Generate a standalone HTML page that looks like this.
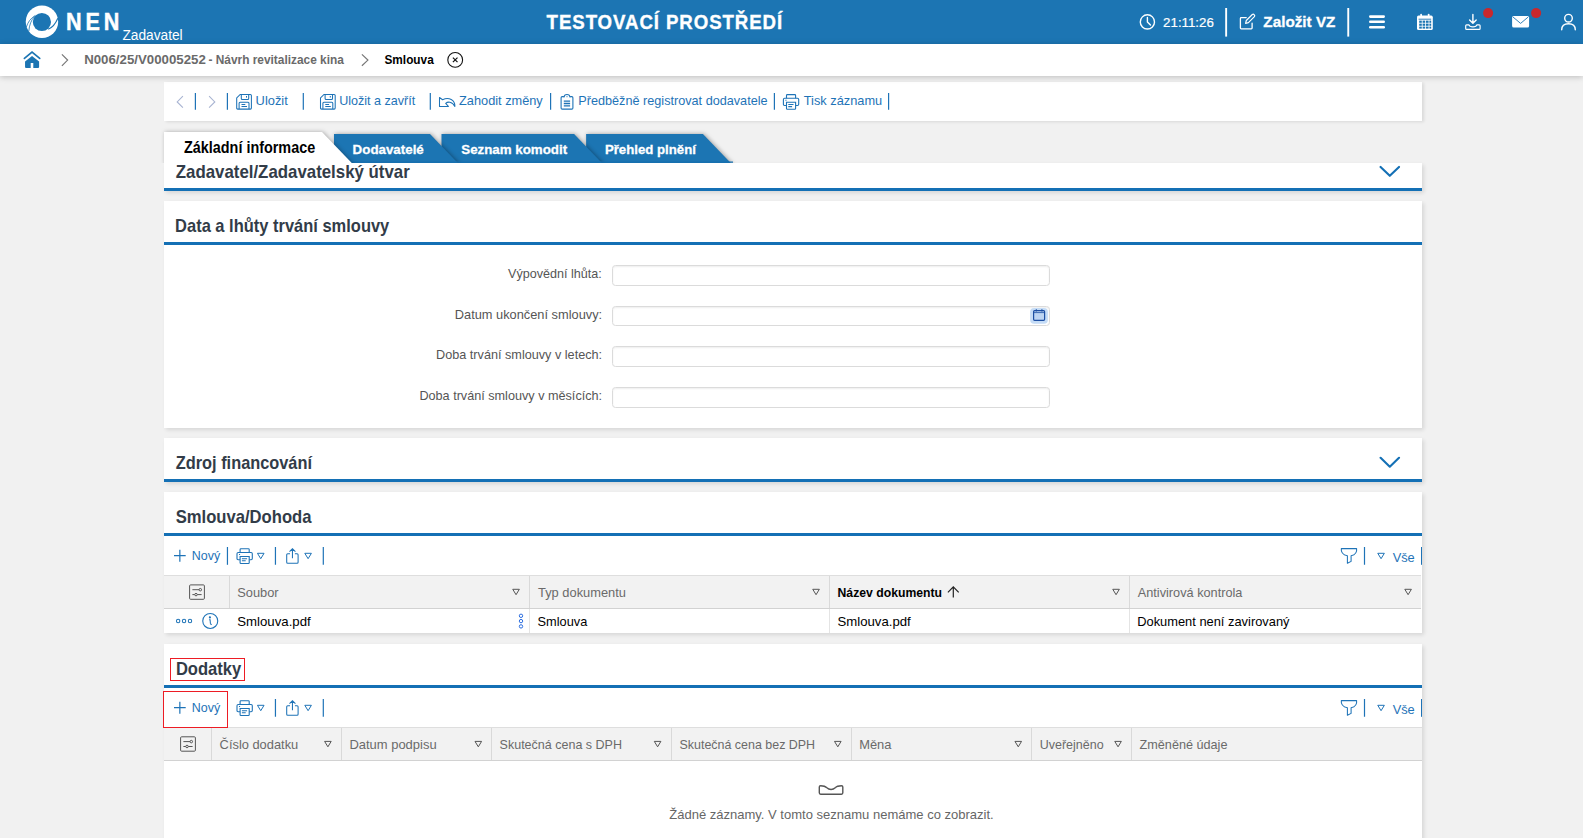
<!DOCTYPE html>
<html lang="cs"><head><meta charset="utf-8"><title>NEN - Smlouva</title>
<style>
html,body{margin:0;padding:0}
body{width:1583px;height:838px;overflow:hidden;background:#f1f1f1;font-family:"Liberation Sans",sans-serif;position:relative}
.t{position:absolute;white-space:nowrap;transform-origin:0 0;display:block}
.abs{position:absolute}
.panel{position:absolute;left:164px;width:1258px;background:#fff;box-shadow:2px 2px 4px rgba(0,0,0,.11)}
.line{position:absolute;left:0;width:1258px;height:3px;background:#1470b5}
.inp{position:absolute;left:612px;width:436px;height:18.5px;border:1px solid #dbdbdb;border-radius:3.5px;background:#fff;box-shadow:inset 0 1px 2px rgba(0,0,0,.07)}
.th{position:absolute;left:0;width:1257px;background:#f2f2f2;border-top:1px solid #dedede;border-bottom:1px solid #d2d2d2;height:32px}
.vs{position:absolute;width:1px;background:#d9d9d9}
svg{position:absolute;left:0;top:0;overflow:visible}
</style></head><body>
<div class="abs" style="left:0;top:0;width:1583px;height:44px;background:#1c75b3"></div>
<div class="panel" style="top:82px;height:39px;box-shadow:2px 1px 3px rgba(0,0,0,.10)"></div>
<div class="abs" style="left:0;top:44px;width:1583px;height:32px;background:#fff;box-shadow:0 1px 6px rgba(0,0,0,.22)"></div>
<div class="panel" style="top:163px;height:28px"><div class="line" style="bottom:0"></div></div>
<div class="panel" style="top:201px;height:227px"><div class="line" style="top:41px"></div></div>
<div class="inp" style="top:265px"></div>
<div class="inp" style="top:305.7px"></div>
<div class="inp" style="top:346.3px"></div>
<div class="inp" style="top:387px"></div>
<div class="panel" style="top:438px;height:44px"><div class="line" style="top:41px"></div></div>
<div class="panel" style="top:492px;height:141px"><div class="line" style="top:41px"></div>
<div class="th" style="top:83px"></div>
<div class="vs" style="left:65px;top:84px;height:32px"></div><div class="vs" style="left:365px;top:84px;height:32px"></div><div class="vs" style="left:665px;top:84px;height:32px"></div><div class="vs" style="left:965px;top:84px;height:32px"></div>
<div class="vs" style="left:365px;top:117px;height:24px;background:#e4e4e4"></div><div class="vs" style="left:665px;top:117px;height:24px;background:#e4e4e4"></div><div class="vs" style="left:965px;top:117px;height:24px;background:#e4e4e4"></div>
</div>
<div class="panel" style="top:644px;height:210px"><div class="line" style="top:41px"></div>
<div class="th" style="top:83px;width:1258px"></div>
<div class="vs" style="left:47px;top:84px;height:32px"></div><div class="vs" style="left:177px;top:84px;height:32px"></div><div class="vs" style="left:327px;top:84px;height:32px"></div><div class="vs" style="left:507px;top:84px;height:32px"></div><div class="vs" style="left:687px;top:84px;height:32px"></div><div class="vs" style="left:867px;top:84px;height:32px"></div><div class="vs" style="left:967px;top:84px;height:32px"></div>
</div>
<div class="abs" style="left:170px;top:658px;width:73px;height:21px;border:1px solid #ed1c24"></div>
<div class="abs" style="left:163px;top:691px;width:63px;height:35px;border:1px solid #ed1c24"></div>

<svg width="1583" height="838" viewBox="0 0 1583 838" fill="none">
<defs>
<g id="save" stroke="#1e73b7" stroke-width="1.05" fill="none"><path d="M4 .5H14.2Q15.2 .5 15.2 1.5V14.1Q15.2 15.1 14.2 15.1H1.5Q.5 15.1 .5 14.1V4Z"/><path d="M5.1 .5V4.4Q5.1 5.4 6.1 5.4H11.5Q12.5 5.4 12.5 4.4V.5"/><path d="M10.3 2V3.6"/><path d="M2.9 15.1V9.2Q2.9 8.2 3.9 8.2H11.8Q12.8 8.2 12.8 9.2V15.1"/><path d="M5.3 10.5H9.1M5.3 12.5H10.8"/></g>
<g id="printer" stroke="#1e73b7" stroke-width="1.1" fill="none"><path d="M3.6 4.2V1.3Q3.6 .5 4.4 .5H11.9Q12.7 .5 12.7 1.3V4.2"/><path d="M3.6 11.4H1.7Q.5 11.4 .5 10.2V5.4Q.5 4.2 1.7 4.2H14.6Q15.8 4.2 15.8 5.4V10.2Q15.8 11.4 14.6 11.4H12.7"/><path d="M3.6 8.2H12.7V14.4Q12.7 15.2 11.9 15.2H4.4Q3.6 15.2 3.6 14.4Z"/><path d="M5.4 10.4H10.6M5.4 12.5H9.2M2.5 6.2H3.6"/></g>
<g id="tri" stroke-width="1" fill="none"><path d="M-3.3 -2.7H3.3L0 2.7Z"/></g>
<g id="settings" stroke="#555" stroke-width="1" fill="none"><rect x=".5" y=".5" width="14.8" height="14.4" rx="1"/><path d="M3.3 5.3H10M12.5 5.3H12.6M3.3 10.2H5.6M8.2 10.2H12.5"/><circle cx="11.2" cy="5.3" r="1.25"/><circle cx="6.9" cy="10.2" r="1.25"/></g>
<g id="tbar" stroke="#1e73b7" fill="none"><path d="M174 555.7H185.7M179.85 549.8V561.7" stroke-width="1.2"/><path d="M275.45 547V564.8M323.3 547V564.8M1364.5 547V564.8" stroke-width="1.2"/><path d="M1421.5 547V564.8" stroke-width="1"/><use href="#printer" x="236.5" y="548.3"/><use href="#tri" x="260.75" y="556"/><use href="#tri" x="308.1" y="556"/><use href="#tri" x="1381.05" y="556"/>
<path d="M290 553.8H287.7Q286.7 553.8 286.7 554.8V562.2Q286.7 563.2 287.7 563.2H297.1Q298.1 563.2 298.1 562.2V554.8Q298.1 553.8 297.1 553.8H294.9M292.45 558.2V548.9M289.5 551.7L292.45 548.8L295.4 551.7" stroke-width="1.05"/>
<path d="M1341.3 548.6H1356.6C1357.2 552.6 1354.6 554.9 1351.1 555.8V561.4L1347.4 563.3V555.8C1343.5 554.9 1340.8 552.6 1341.3 548.6Z" stroke-width="1.05" stroke-linejoin="round"/></g>
</defs>
<!-- tabs -->
<clipPath id="tc"><rect x="0" y="120" width="1583" height="43"/></clipPath>
<g clip-path="url(#tc)">
<g style="filter:drop-shadow(1.5px 0px 2px rgba(0,0,0,.35))"><path d="M586.1 134H702.9L732.7 165H586.1Z" fill="#1c75b3"/></g>
<g style="filter:drop-shadow(1.5px 0px 2px rgba(0,0,0,.35))"><path d="M441.5 134H574.1L603.9 165H441.5Z" fill="#1c75b3"/></g>
<g style="filter:drop-shadow(1.5px 0px 2px rgba(0,0,0,.35))"><path d="M334 134H430L459.8 165H334Z" fill="#1c75b3"/></g>
<path d="M334 162.2H733" stroke="#166fae" stroke-width="1.2"/>
<g style="filter:drop-shadow(1.5px 0px 2px rgba(0,0,0,.3))"><path d="M164 132H322L353.7 165H164Z" fill="#fff"/></g></g>
<!-- logo -->
<circle cx="41.95" cy="21.7" r="16.2" fill="#fff"/><circle cx="41.9" cy="22" r="9.1" fill="#1c75b3"/>
<path d="M35.2 15.5Q28.5 19.5 26.2 27.5M34.6 16.3Q29.5 22 28.8 31.2" stroke="#1c75b3" stroke-width=".8"/><path d="M48.2 29.2Q54.5 26.5 57.8 18.2" stroke="#1c75b3" stroke-width="1.1"/>
<!-- home -->
<path d="M24.4 58.4L32.03 52.2L39.7 58.4" stroke="#1c75b3" stroke-width="1.7" stroke-linecap="round"/>
<path d="M32.03 56.1L39.1 61.6V67Q39.1 68.1 38 68.1H33.3V63H30.7V68.1H26.1Q25.05 68.1 25.05 67V61.6Z" fill="#1c75b3"/>
<path d="M61.9 54.4L67.6 60.1L61.9 65.8M361.9 54.4L367.9 60.1L361.9 65.8" stroke="#777" stroke-width="1.2"/>
<circle cx="455.2" cy="59.9" r="7.4" stroke="#111" stroke-width="1.1"/><path d="M452.9 57.6L457.5 62.2M457.5 57.6L452.9 62.2" stroke="#111" stroke-width="1.2"/>
<!-- header right -->
<g stroke="#fff" stroke-width="1.4" stroke-linecap="round" stroke-linejoin="round">
<circle cx="1147.4" cy="21.9" r="7.1"/><path d="M1147.4 17.4V22L1150.5 25.1"/>
<path d="M1246.2 17.6H1241.2Q1240.4 17.6 1240.4 18.4V28.1Q1240.4 28.9 1241.2 28.9H1251.3Q1252.1 28.9 1252.1 28.1V23.2" stroke-width="1.3"/>
<path d="M1245.6 23.4L1246.3 20.5L1252.3 14.5Q1253.3 13.8 1254.3 14.8Q1255.2 15.8 1254.4 16.7L1248.4 22.7Z" stroke-width="1.2"/>
<circle cx="1568.5" cy="18.2" r="3.8"/><path d="M1561.7 29.8Q1561.7 23.7 1568.5 23.7Q1575.3 23.7 1575.3 29.8"/>
<path d="M1472.9 14.5V23M1469.6 20L1472.9 23.3L1476.2 20"/><path d="M1469 24.8H1466.6Q1465.7 24.8 1465.7 25.7V28.4Q1465.7 29.3 1466.6 29.3H1479.2Q1480.1 29.3 1480.1 28.4V25.7Q1480.1 24.8 1479.2 24.8H1476.8Q1476.4 26.8 1472.9 26.8Q1469.4 26.8 1469 24.8Z" stroke-width="1.2"/>
</g>
<rect x="1225.2" y="8" width="1.9" height="28.6" fill="#fff"/><rect x="1347.3" y="8" width="1.9" height="28.6" fill="#fff"/>
<rect x="1369" y="15.2" width="16" height="2.7" rx="1.3" fill="#fff"/><rect x="1369" y="20.4" width="16" height="2.7" rx="1.3" fill="#fff"/><rect x="1369" y="25.9" width="16" height="2.7" rx="1.3" fill="#fff"/>
<!-- calendar -->
<rect x="1417" y="15.6" width="15.8" height="14.4" rx="1.6" fill="#fff"/><rect x="1420.3" y="13.8" width="1.7" height="3.6" rx=".8" fill="#fff"/><rect x="1427.8" y="13.8" width="1.7" height="3.6" rx=".8" fill="#fff"/>
<path d="M1418.6 19.2H1431.2" stroke="#1c75b3" stroke-width=".9"/>
<g fill="#1c75b3"><rect x="1419.2" y="20.6" width="2.6" height="2.2"/><rect x="1422.6" y="20.6" width="2.6" height="2.2"/><rect x="1426" y="20.6" width="2.6" height="2.2"/><rect x="1429.4" y="20.6" width="1.8" height="2.2"/><rect x="1419.2" y="23.6" width="2.6" height="2.2"/><rect x="1422.6" y="23.6" width="2.6" height="2.2"/><rect x="1426" y="23.6" width="2.6" height="2.2"/><rect x="1429.4" y="23.6" width="1.8" height="2.2"/><rect x="1419.2" y="26.6" width="2.6" height="2"/><rect x="1422.6" y="26.6" width="2.6" height="2"/><rect x="1426" y="26.6" width="2.6" height="2"/><rect x="1429.4" y="26.6" width="1.8" height="2"/></g>
<!-- mail -->
<rect x="1512.1" y="16" width="17" height="11.6" rx="1.6" fill="#fff"/><path d="M1513 17L1520.6 23.4L1528.2 17" stroke="#1c75b3" stroke-width=".9"/>
<circle cx="1488.1" cy="13.1" r="5" fill="#c8282d"/><circle cx="1536.1" cy="13.1" r="5" fill="#c8282d"/>
<!-- toolbar -->
<path d="M182.9 96.2L177.2 101.95L182.9 107.7M209.1 96.2L214.8 101.95L209.1 107.7" stroke="#a8b4d2" stroke-width="1.1"/>
<path d="M195.4 93.1V109.8M227.4 93.1V109.8M303.3 93.1V109.8M430.3 93.1V109.8M550.6 93.1V109.8M774.4 93.1V109.8M888.6 93.1V109.8" stroke="#1e73b7" stroke-width="1.2"/>
<use href="#save" x="236.2" y="94"/><use href="#save" x="320" y="94"/>
<path d="M439.5 97.5V106.4H448.4L445.7 103.4C447.5 101.6 452 101 454.9 106.4C455 100 449 96.8 442.6 99.7Z" stroke="#1e73b7" stroke-width="1.05" stroke-linejoin="round"/>
<g stroke="#1e73b7" stroke-width="1.1"><path d="M563.9 96.6H562.2Q561.1 96.6 561.1 97.7V108Q561.1 109.1 562.2 109.1H571.8Q572.9 109.1 572.9 108V97.7Q572.9 96.6 571.8 96.6H570.1"/><path d="M563.9 97.4Q564.2 94.5 567 94.5Q569.8 94.5 570.1 97.4"/><path d="M566.6 96.6H567.4"/><path d="M563.8 101.1H570.1M563.8 103.5H570.1M563.8 105.9H570.1" stroke-width="1.3"/></g>
<use href="#printer" x="782.9" y="94.1"/>
<!-- section chevrons -->
<path d="M1380.6 166.9L1389.8 175.8L1399 166.9M1380.6 457.8L1389.8 466.7L1399 457.8" stroke="#1470b5" stroke-width="2.1" stroke-linecap="round" stroke-linejoin="round"/>
<!-- date picker -->
<rect x="1030.1" y="308" width="17.8" height="15.7" rx="4" fill="#c5dcf6"/><rect x="1033.6" y="310.7" width="11" height="9.6" rx="1" stroke="#1d4fa3" stroke-width="1.2" fill="#bdd5f3"/><path d="M1033.6 312.6H1044.6" stroke="#1d4fa3" stroke-width=".8"/><path d="M1036.3 309.2V311.6M1041.9 309.2V311.6" stroke="#1d4fa3" stroke-width="1.1"/>
<!-- table toolbars -->
<use href="#tbar"/><path d="M227.45 547V564.8" stroke="#1e73b7" stroke-width="1.2"/><use href="#tbar" y="152"/>
<!-- table 1 header -->
<use href="#settings" x="189.1" y="584.4"/>
<g stroke="#555"><use href="#tri" x="516.05" y="592"/><use href="#tri" x="816.05" y="592"/><use href="#tri" x="1116.05" y="592"/><use href="#tri" x="1408.1" y="592"/></g>
<path d="M953.3 597.6V587M947.9 592.3L953.3 586.9L958.7 592.3" stroke="#222" stroke-width="1.2"/>
<g stroke="#1e73b7" stroke-width="1.05"><circle cx="178.15" cy="621" r="1.7"/><circle cx="184.05" cy="621" r="1.7"/><circle cx="190" cy="621" r="1.7"/><circle cx="210.25" cy="620.95" r="7.5" stroke-width="1.1"/><path d="M209.1 619.7H210.1L210.4 623.4Q210.6 624.5 211.8 624.5"/><circle cx="209.9" cy="617.4" r=".55" fill="#1e73b7"/></g>
<g stroke="#2b6de0" stroke-width="1"><circle cx="521" cy="615.8" r="1.7"/><circle cx="521" cy="621.1" r="1.7"/><circle cx="521" cy="626.4" r="1.7"/></g>
<!-- table 2 header -->
<use href="#settings" x="180.1" y="736.3"/>
<g stroke="#555"><use href="#tri" x="327.9" y="744.1"/><use href="#tri" x="478.3" y="744.1"/><use href="#tri" x="657.6" y="744.1"/><use href="#tri" x="837.8" y="744.1"/><use href="#tri" x="1018.25" y="744.1"/><use href="#tri" x="1118.05" y="744.1"/></g>
<path d="M819.3 787Q819.3 785.7 820.6 785.7Q825 785.7 826.5 787.5Q831 791.5 835.6 787.5Q837 785.7 841.5 785.7Q842.8 785.7 842.8 787V792.8Q842.8 794.2 841.5 794.2H820.6Q819.3 794.2 819.3 792.8Z" stroke="#555" stroke-width="1.4"/>
</svg>

<span class="t" style="left:65px;top:10px;font-size:24.2px;line-height:24.2px;color:#fff;transform:translateX(0.92px) scaleX(0.8904);font-weight:bold;letter-spacing:4.5px;-webkit-text-stroke:0.5px #fff">NEN</span><span class="t" style="left:122px;top:28px;font-size:14.21px;line-height:14.21px;color:#fff;transform:translateX(0.43px) scaleX(0.9656)">Zadavatel</span><span class="t" style="left:546px;top:12px;font-size:20.36px;line-height:20.36px;color:#fff;transform:translateX(0.60px) scaleX(0.9162);font-weight:bold;letter-spacing:1px;-webkit-text-stroke:0.35px #fff">TESTOVACÍ PROSTŘEDÍ</span><span class="t" style="left:1163px;top:16px;font-size:13.43px;line-height:13.43px;color:#fff;transform:translateX(0.10px) scaleX(0.9900);-webkit-text-stroke:0.2px #fff">21:11:26</span><span class="t" style="left:1263px;top:14px;font-size:15.5px;line-height:15.5px;color:#fff;transform:translateX(0.36px) scaleX(0.9848);font-weight:bold;-webkit-text-stroke:0.3px #fff">Založit VZ</span><span class="t" style="left:84px;top:54px;font-size:12.48px;line-height:12.48px;color:#6a6a6a;transform:translateX(0.17px) scaleX(1.0631);font-weight:bold">N006/25/V00005252</span><span class="t" style="left:208px;top:54px;font-size:12.48px;line-height:12.48px;color:#6a6a6a;transform:translateX(0.50px) scaleX(0.9527);font-weight:bold">- Návrh revitalizace kina</span><span class="t" style="left:384px;top:54px;font-size:12.48px;line-height:12.48px;color:#000;transform:translateX(0.48px) scaleX(0.9476);font-weight:bold">Smlouva</span><span class="t" style="left:255px;top:94px;font-size:13.19px;line-height:13.19px;color:#1e73b7;transform:translateX(0.61px) scaleX(0.9750)">Uložit</span><span class="t" style="left:339px;top:94px;font-size:13.19px;line-height:13.19px;color:#1e73b7;transform:translateX(0.13px) scaleX(0.9524)">Uložit a zavřít</span><span class="t" style="left:459px;top:94px;font-size:13.19px;line-height:13.19px;color:#1e73b7;transform:translateX(0.05px) scaleX(0.9674)">Zahodit změny</span><span class="t" style="left:578px;top:94px;font-size:13.19px;line-height:13.19px;color:#1e73b7;transform:translateX(0.29px) scaleX(0.9598)">Předběžně registrovat dodavatele</span><span class="t" style="left:803px;top:94px;font-size:13.19px;line-height:13.19px;color:#1e73b7;transform:translateX(0.75px) scaleX(0.9699)">Tisk záznamu</span><span class="t" style="left:184px;top:140px;font-size:15.86px;line-height:15.86px;color:#000;transform:translateX(0.03px) scaleX(0.9073);font-weight:bold">Základní informace</span><span class="t" style="left:352px;top:143px;font-size:13.6px;line-height:13.6px;color:#fff;transform:translateX(0.60px) scaleX(0.9810);font-weight:bold;-webkit-text-stroke:0.3px #fff">Dodavatelé</span><span class="t" style="left:461px;top:143px;font-size:13.6px;line-height:13.6px;color:#fff;transform:translateX(0.26px) scaleX(0.9800);font-weight:bold;-webkit-text-stroke:0.3px #fff">Seznam komodit</span><span class="t" style="left:604px;top:143px;font-size:13.6px;line-height:13.6px;color:#fff;transform:translateX(0.92px) scaleX(0.9710);font-weight:bold;-webkit-text-stroke:0.3px #fff">Přehled plnění</span><span class="t" style="left:175px;top:163px;font-size:18.17px;line-height:18.17px;color:#323c48;transform:translateX(0.77px) scaleX(0.9272);font-weight:bold">Zadavatel/Zadavatelský útvar</span><span class="t" style="left:175px;top:217px;font-size:18.17px;line-height:18.17px;color:#323c48;transform:translateX(0.09px) scaleX(0.9071);font-weight:bold">Data a lhůty trvání smlouvy</span><span class="t" style="left:175px;top:454px;font-size:18.17px;line-height:18.17px;color:#323c48;transform:translateX(0.77px) scaleX(0.9002);font-weight:bold">Zdroj financování</span><span class="t" style="left:175px;top:508px;font-size:18.17px;line-height:18.17px;color:#323c48;transform:translateX(0.65px) scaleX(0.9159);font-weight:bold">Smlouva/Dohoda</span><span class="t" style="left:175px;top:660px;font-size:18.17px;line-height:18.17px;color:#323c48;transform:translateX(0.89px) scaleX(0.9132);font-weight:bold">Dodatky</span><span class="t" style="left:508px;top:267px;font-size:13.19px;line-height:13.19px;color:#555555;transform:translateX(0.07px) scaleX(0.9540)">Výpovědní lhůta:</span><span class="t" style="left:454px;top:308px;font-size:13.19px;line-height:13.19px;color:#555555;transform:translateX(0.79px) scaleX(0.9712)">Datum ukončení smlouvy:</span><span class="t" style="left:436px;top:348px;font-size:13.19px;line-height:13.19px;color:#555555;transform:translateX(0.09px) scaleX(0.9596)">Doba trvání smlouvy v letech:</span><span class="t" style="left:419px;top:389px;font-size:13.19px;line-height:13.19px;color:#555555;transform:translateX(0.39px) scaleX(0.9588)">Doba trvání smlouvy v měsících:</span><span class="t" style="left:191px;top:549px;font-size:13.19px;line-height:13.19px;color:#1e73b7;transform:translateX(0.79px) scaleX(0.9431)">Nový</span><span class="t" style="left:1392px;top:551px;font-size:13.19px;line-height:13.19px;color:#1e73b7;transform:translateX(0.65px) scaleX(0.9724)">Vše</span><span class="t" style="left:237px;top:586px;font-size:13.19px;line-height:13.19px;color:#6a6a6a;transform:translateX(0.27px) scaleX(0.9723)">Soubor</span><span class="t" style="left:538px;top:586px;font-size:13.19px;line-height:13.19px;color:#6a6a6a;transform:translateX(0.04px) scaleX(0.9753)">Typ dokumentu</span><span class="t" style="left:837px;top:586px;font-size:13.19px;line-height:13.19px;color:#000;transform:translateX(0.53px) scaleX(0.9261);font-weight:bold">Název dokumentu</span><span class="t" style="left:1137px;top:586px;font-size:13.19px;line-height:13.19px;color:#6a6a6a;transform:translateX(0.77px) scaleX(0.9645)">Antivirová kontrola</span><span class="t" style="left:237px;top:615px;font-size:13.19px;line-height:13.19px;color:#000;transform:translateX(0.25px) scaleX(1.0021)">Smlouva.pdf</span><span class="t" style="left:537px;top:615px;font-size:13.19px;line-height:13.19px;color:#000;transform:translateX(0.57px) scaleX(0.9693)">Smlouva</span><span class="t" style="left:837px;top:615px;font-size:13.19px;line-height:13.19px;color:#000;transform:translateX(0.45px) scaleX(0.9993)">Smlouva.pdf</span><span class="t" style="left:1137px;top:615px;font-size:13.19px;line-height:13.19px;color:#000;transform:translateX(0.19px) scaleX(0.9755)">Dokument není zavirovaný</span><span class="t" style="left:191px;top:701px;font-size:13.19px;line-height:13.19px;color:#1e73b7;transform:translateX(0.79px) scaleX(0.9431)">Nový</span><span class="t" style="left:1392px;top:703px;font-size:13.19px;line-height:13.19px;color:#1e73b7;transform:translateX(0.65px) scaleX(0.9724)">Vše</span><span class="t" style="left:219px;top:738px;font-size:13.19px;line-height:13.19px;color:#6a6a6a;transform:translateX(0.61px) scaleX(0.9747)">Číslo dodatku</span><span class="t" style="left:349px;top:738px;font-size:13.19px;line-height:13.19px;color:#6a6a6a;transform:translateX(0.39px) scaleX(0.9833)">Datum podpisu</span><span class="t" style="left:499px;top:738px;font-size:13.19px;line-height:13.19px;color:#6a6a6a;transform:translateX(0.57px) scaleX(0.9489)">Skutečná cena s DPH</span><span class="t" style="left:679px;top:738px;font-size:13.19px;line-height:13.19px;color:#6a6a6a;transform:translateX(0.47px) scaleX(0.9440)">Skutečná cena bez DPH</span><span class="t" style="left:859px;top:738px;font-size:13.19px;line-height:13.19px;color:#6a6a6a;transform:translateX(0.19px) scaleX(0.9781)">Měna</span><span class="t" style="left:1039px;top:738px;font-size:13.19px;line-height:13.19px;color:#6a6a6a;transform:translateX(0.73px) scaleX(0.9477)">Uveřejněno</span><span class="t" style="left:1139px;top:738px;font-size:13.19px;line-height:13.19px;color:#6a6a6a;transform:translateX(0.55px) scaleX(0.9591)">Změněné údaje</span><span class="t" style="left:669px;top:808px;font-size:13.19px;line-height:13.19px;color:#666;transform:translateX(0.23px) scaleX(0.9866)">Žádné záznamy. V tomto seznamu nemáme co zobrazit.</span>
</body></html>
